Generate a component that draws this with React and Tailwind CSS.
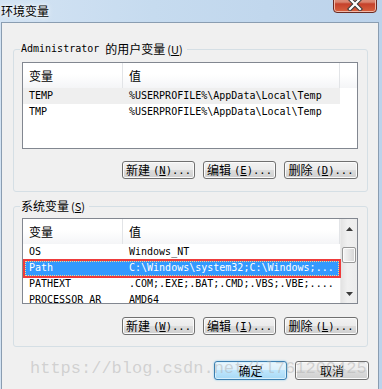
import React from "react";

const cjk = "font-['Noto_Sans_CJK_SC',sans-serif]";
const mono = "font-['DejaVu_Sans_Mono',monospace]";

function Btn({ cn, hk, primary, w = "w-[73px]", h = "h-[18px]" }) {
  const base = primary
    ? "border-[#3c7fb1] bg-[linear-gradient(#eaf6fd_0%,#d9f0fc_50%,#bee6fd_50%,#a7d9f5_100%)] shadow-[inset_0_0_0_1px_#d8f0fb,0_0_2px_#7ec4ec]"
    : "border-[#707070] bg-[linear-gradient(#f2f2f2_0%,#ebebeb_50%,#dddddd_50%,#cfcfcf_100%)] shadow-[inset_0_0_0_1px_#fbfbfb]";
  return (
    <div className={`${w} ${h} ${base} border rounded-[3px] flex items-center justify-center text-black`}>
      <span className={`${cjk} text-[12px] leading-[14px]`}>{cn}</span>
      {hk && (
        <span className={`${mono} text-[10.5px] leading-[14px] ml-[3px]`}>
          (<span className="underline underline-offset-1">{hk}</span>)...
        </span>
      )}
    </div>
  );
}

function Row({ name, value, gray, selected }) {
  let cls = "";
  if (gray) cls = "bg-[#efefef]";
  if (selected) cls = "bg-[#3399ff] text-white";
  return (
    <div className={`relative flex h-[16px] w-[317px] shrink-0 ${cls} ${mono} text-[10px] leading-[16px] whitespace-nowrap`}>
      <div className="w-[100px] pl-[6px] overflow-hidden">{name}</div>
      <div className="w-[217px] pl-[6px] overflow-hidden">{value}</div>
      {selected && (
        <>
          <span className="absolute left-[2px] right-[1px] top-[1px] bottom-0 border border-dotted border-[#ffd28a]" />
          <span className="absolute left-0 -right-[1px] -top-[1px] -bottom-[2px] border-2 border-[#ee3b3b]" />
        </>
      )}
    </div>
  );
}

function Header({ filler }) {
  return (
    <div className="flex h-[25px] shrink-0 bg-[linear-gradient(#ffffff_0%,#ffffff_45%,#f4f5f7_100%)]">
      <div className={`w-[100px] pl-[6px] border-r border-[#e2e4e7] flex items-center ${cjk} text-[12px] text-black`}>变量</div>
      <div className={`w-[217px] pl-[6px] border-r border-[#e2e4e7] flex items-center ${cjk} text-[12px] text-black`}>值</div>
      {filler && <div className="flex-1" />}
    </div>
  );
}

function Scrollbar() {
  return (
    <div className="w-[17px] flex flex-col bg-[linear-gradient(90deg,#e3e3e3,#f0f0f0_40%,#ececec)] border-l border-[#ebebeb]">
      <div className="h-[17px] flex items-center justify-center pt-[3px]">
        <svg width="7" height="4" viewBox="0 0 7 4"><path d="M3.5 0L7 4H0z" fill="#3b3b3b" /></svg>
      </div>
      <div className="flex-1 flex flex-col items-center">
        <div className="mt-[11px] w-[14px] h-[16px] rounded-[2px] border border-[#979797] bg-[linear-gradient(90deg,#f5f5f5,#e6e6e6_50%,#d4d4d4)] shadow-[inset_0_0_0_1px_#fbfbfb]" />
      </div>
      <div className="h-[17px] flex items-center justify-center pb-[1px]">
        <svg width="7" height="4" viewBox="0 0 7 4"><path d="M0 0H7L3.5 4z" fill="#3b3b3b" /></svg>
      </div>
    </div>
  );
}

function Group({ legend, children, className }) {
  return (
    <fieldset className={`border border-[#d5dfe5] rounded-[3px] pl-[8px] pr-[9px] ${className}`}>
      <legend className="flex items-center h-[14px] -ml-[2px] pl-[1px] pr-[4px] text-black">{legend}</legend>
      {children}
    </fieldset>
  );
}

export default function App() {
  return (
    <div className="relative w-[382px] h-[389px] overflow-hidden flex flex-col bg-[linear-gradient(90deg,#d3e3f3,#c6dbef_40%,#bcd3eb)]">
      {/* Title bar */}
      <div className="relative h-[22px] shrink-0">
        <span className={`absolute left-[1px] top-[3px] ${cjk} text-[12px] leading-[16px] text-black [text-shadow:0_0_6px_#ffffff,0_0_3px_#ffffff]`}>
          环境变量
        </span>
        <div className="absolute left-[333px] -top-[7px] w-[44px] h-[20px] rounded-[4px] border border-[#6b2a22] bg-[linear-gradient(#e8a493_0%,#d9836e_45%,#c5412b_55%,#d8623f_100%)] shadow-[inset_0_0_0_1px_#f0b9a9] flex items-center justify-center">
          <svg width="16" height="14" viewBox="0 0 16 14" className="mt-[2px]">
            <path d="M3 2L13 12M13 2L3 12" stroke="#3a3a3a" strokeWidth="4.2" strokeLinecap="square" />
            <path d="M3 2L13 12M13 2L3 12" stroke="#ffffff" strokeWidth="2.2" strokeLinecap="square" />
          </svg>
        </div>
      </div>

      {/* Body */}
      <div className="flex-1 ml-[1px] mr-[3px] border-t border-l border-r border-[#8a9db1] bg-[#f0f0f0] pl-[11px] pr-[10px] flex flex-col">
        <Group
          className="mt-[19px] pt-[6px] pb-[12px]"
          legend={
            <>
              <span className={`${mono} text-[10px] leading-[14px]`}>Administrator&nbsp;</span>
              <span className={`${cjk} text-[12px] leading-[14px]`}>的用户变量</span>
              <span className={`${cjk} text-[11px] leading-[14px] ml-[2px]`}>(<span className="underline">U</span>)</span>
            </>
          }
        >
          <div className="h-[87px] border border-[#828790] bg-white flex flex-col overflow-hidden">
            <Header filler />
            <Row name="TEMP" value="%USERPROFILE%\AppData\Local\Temp" gray />
            <Row name="TMP" value="%USERPROFILE%\AppData\Local\Temp" />
          </div>
          <div className="mt-[12px] flex justify-end gap-[8px]">
            <Btn cn="新建" hk="N" />
            <Btn cn="编辑" hk="E" />
            <Btn cn="删除" hk="D" w="w-[74px]" />
          </div>
        </Group>

        <Group
          className="mt-[7px] pt-[5px] pb-[11px]"
          legend={
            <>
              <span className={`${cjk} text-[12px] leading-[14px]`}>系统变量</span>
              <span className={`${cjk} text-[11px] leading-[14px] ml-[2px]`}>(<span className="underline">S</span>)</span>
            </>
          }
        >
          <div className="h-[86px] border border-[#828790] bg-white flex overflow-hidden">
            <div className="flex flex-col w-[317px]">
              <Header />
              <Row name="OS" value="Windows_NT" />
              <Row name="Path" value="C:\Windows\system32;C:\Windows;..." selected />
              <Row name="PATHEXT" value=".COM;.EXE;.BAT;.CMD;.VBS;.VBE;...." />
              <Row name="PROCESSOR_AR" value="AMD64" />
            </div>
            <Scrollbar />
          </div>
          <div className="mt-[13px] flex justify-end gap-[8px]">
            <Btn cn="新建" hk="W" />
            <Btn cn="编辑" hk="I" />
            <Btn cn="删除" hk="L" w="w-[74px]" />
          </div>
        </Group>

        <div className="mt-[14px] -mr-[1px] flex justify-end gap-[8px]">
          <Btn cn="确定" primary h="h-[19px]" />
          <Btn cn="取消" w="w-[74px]" h="h-[19px]" />
        </div>
      </div>

      {/* Watermark */}
      <div className="absolute left-[30px] top-[359px] font-['Liberation_Mono',monospace] text-[17px] leading-[20px] text-[rgba(170,170,170,0.45)] pointer-events-none whitespace-nowrap">
        https://blog.csdn.net/kl761200425
      </div>
    </div>
  );
}
